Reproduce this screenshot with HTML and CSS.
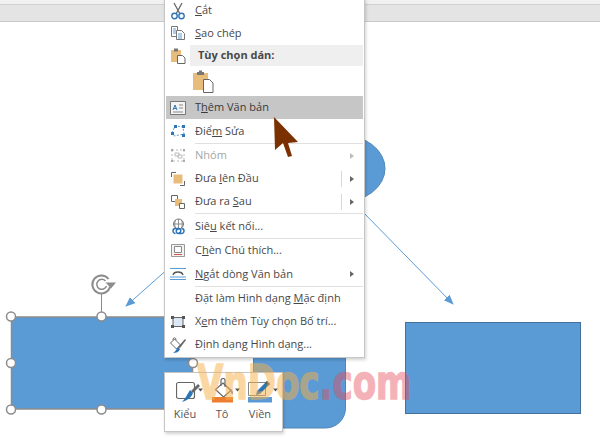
FILE: index.html
```html
<!DOCTYPE html>
<html lang="vi">
<head>
<meta charset="utf-8">
<title>VnDoc</title>
<link rel="stylesheet" href="styles.css">
</head>
<body>
<div class="stage">
  <div class="strip"></div>
  <div class="band"></div>

  <svg class="canvas" width="600" height="447" viewBox="0 0 600 447">
    <defs>
      <marker id="head" markerWidth="10" markerHeight="10" refX="9" refY="4" orient="auto" markerUnits="userSpaceOnUse">
        <path d="M0 0L10 4L0 8z" fill="#5b9bd5"/>
      </marker>
    </defs>
    <ellipse cx="340" cy="168.500" rx="45" ry="34" fill="#5b9bd5" stroke="#4f86b8"/>
    <path d="M253.500 340H345.500V408a20 20 0 0 1-20 20H253.500z" fill="#5b9bd5" stroke="#4f86b8"/>
    <rect x="405.500" y="322.500" width="175" height="91" fill="#5b9bd5" stroke="#41719c"/>
    <line x1="170" y1="267" x2="126" y2="306" stroke="#5b9bd5" marker-end="url(#head)"/>
    <line x1="360" y1="209" x2="453" y2="304" stroke="#5b9bd5" marker-end="url(#head)"/>
    <rect x="11.500" y="317" width="181" height="92" fill="#5b9bd5" stroke="#8c8c8c" stroke-width="1.500"/>
    <line x1="101.500" y1="293" x2="101.500" y2="316" stroke="#8c8c8c"/>
    <path d="M108.500 279a9 9 0 1 0 1.500 8" fill="none" stroke="#8c8c8c" stroke-width="2"/>
    <path d="M105.500 281a5 5 0 1 0 1 5" fill="none" stroke="#8c8c8c" stroke-width="1.500"/>
    <path d="M105.500 282.500h10.500l-5 6z" fill="#8c8c8c"/>
    <g fill="#fff" stroke="#8c8c8c" stroke-width="1.500">
      <circle cx="11" cy="316.500" r="4.500"/>
      <circle cx="101.500" cy="316.500" r="4.500"/>
      <circle cx="193" cy="316.500" r="4.500"/>
      <circle cx="11" cy="363" r="4.500"/>
      <circle cx="193" cy="363" r="4.500"/>
      <circle cx="11" cy="409.500" r="4.500"/>
      <circle cx="101.500" cy="409.500" r="4.500"/>
    </g>
  </svg>

  <div class="menu">
    <div class="row row-cut">
      <span class="ico"><svg width="16" height="18" viewBox="0 0 16 18"><path d="M4 1l6 11M12 1L6 12" stroke="#666" stroke-width="1.300" fill="none"/><circle cx="4.500" cy="14" r="2.700" fill="none" stroke="#2e75b6" stroke-width="1.400"/><circle cx="11.500" cy="14" r="2.700" fill="none" stroke="#2e75b6" stroke-width="1.400"/></svg></span>
      <span class="label"><u>C</u>ắt</span>
    </div>
    <div class="row row-tall">
      <span class="ico"><svg width="16" height="16" viewBox="0 0 16 16"><path d="M1.500 1.500h6v10h-6z" fill="#fff" stroke="#777"/><path d="M6.500 5.500h5l3 3v6h-8z" fill="#fff" stroke="#777"/><path d="M3 4h3M3 6h3M3 8h3M8 9h4M8 11h4M8 13h4" stroke="#5b9bd5"/></svg></span>
      <span class="label"><u>S</u>ao chép</span>
    </div>
    <div class="row row-head">
      <span class="ico"><svg width="16" height="17" viewBox="0 0 16 17"><path d="M1 3h10v12H1z" fill="#e8bd7c"/><path d="M4 1.500h4v3H4z" fill="#777"/><path d="M7.500 8.500h5l2.500 2.500v5.500H7.500z" fill="#fff" stroke="#666"/></svg></span>
      <span class="label label-head">Tùy chọn dán:</span>
    </div>
    <div class="row row-paste">
      <span class="ico"></span>
      <svg class="paste" width="22" height="24" viewBox="0 0 22 24"><path d="M1 4h15v17H1z" fill="#e8bd7c"/><path d="M5 3h7v3H5z" fill="#777"/><path d="M7 1.500h3v2H7z" fill="#777"/><path d="M11.500 10.500h6l3.500 3.500v9.500h-9.500z" fill="#fff" stroke="#666"/></svg>
    </div>
    <div class="row row-on">
      <span class="ico"><svg width="16" height="14" viewBox="0 0 16 14"><path d="M.5.500h15v13H.5z" fill="#f4f4f4" stroke="#777"/><path d="M3 9l2-5 2 5M3.800 7.500h2.400" stroke="#2e75b6" fill="none"/><path d="M9 4h4M9 7h4M3 11h10" stroke="#888"/></svg></span>
      <span class="label">T<u>h</u>êm Văn bản</span>
    </div>
    <div class="row row-last">
      <span class="ico"><svg width="16" height="14" viewBox="0 0 16 14"><path d="M2 9L5 2l8 1 1 7-10 2z" fill="none" stroke="#5b9bd5" stroke-dasharray="2 1.500"/><path d="M4 1h3v3H4zM12 1h3v3h-3zM1 8h3v3H1zM12 10h3v3h-3z" fill="#2e75b6"/></svg></span>
      <span class="label">Điể<u>m</u> Sửa</span>
    </div>
    <div class="sep"></div>
    <div class="row row-off">
      <span class="ico"><svg width="16" height="15" viewBox="0 0 16 15"><path d="M2 2h12v11H2z" fill="none" stroke="#bbb" stroke-dasharray="2 2"/><path d="M5 5h4v3H5zM8 7h4v3H8z" fill="#fff" stroke="#bbb"/><path d="M1 1h2v2H1zM13 1h2v2h-2zM1 12h2v2H1zM13 12h2v2h-2z" fill="#aaa"/></svg></span>
      <span class="label">Nhóm</span>
      <span class="tri tri-off"></span>
    </div>
    <div class="row">
      <span class="ico"><svg width="16" height="16" viewBox="0 0 16 16"><path d="M1.500 6V1.500H6M10 14.500h4.500V10" fill="none" stroke="#666"/><path d="M3.500 3.500h9v9h-9z" fill="#e8bd7c"/></svg></span>
      <span class="label">Đưa <u>l</u>ên Đầu</span>
      <span class="split"></span>
      <span class="tri"></span>
    </div>
    <div class="row">
      <span class="ico"><svg width="16" height="16" viewBox="0 0 16 16"><path d="M1.500 1.500h6v6h-6z" fill="#fff" stroke="#666"/><path d="M5 5h7v7H5z" fill="#e8bd7c"/><path d="M9.500 9.500h5v5h-5z" fill="#fff" stroke="#666"/></svg></span>
      <span class="label">Đưa ra <u>S</u>au</span>
      <span class="split"></span>
      <span class="tri"></span>
    </div>
    <div class="sep"></div>
    <div class="row row-tall">
      <span class="ico"><svg width="17" height="17" viewBox="0 0 17 17"><circle cx="8.500" cy="6" r="5" fill="none" stroke="#777"/><path d="M3.500 6h10M8.500 1v10M5.500 2c-1 2.500-1 5.500 0 8M11.500 2c1 2.500 1 5.500 0 8" fill="none" stroke="#777" stroke-width=".8"/><path d="M5.500 15.500a2.500 2.500 0 0 1 0-5h3a2.200 2.200 0 0 1 0 4.500M11.500 10.500a2.500 2.500 0 0 1 0 5h-3a2.200 2.200 0 0 1 0-4.500" fill="none" stroke="#2e75b6" stroke-width="1.500"/></svg></span>
      <span class="label">Siê<u>u</u> kết nối...</span>
    </div>
    <div class="sep"></div>
    <div class="row">
      <span class="ico"><svg width="16" height="15" viewBox="0 0 16 15"><path d="M1.500 1.500h13v12h-13z" fill="#f2f2f2" stroke="#999"/><path d="M4.500 3.500h7v6h-7z" fill="#fff" stroke="#888"/><path d="M4 11.500h8" stroke="#d9534f"/></svg></span>
      <span class="label">C<u>h</u>èn Chú thích...</span>
    </div>
    <div class="row row-tall">
      <span class="ico"><svg width="16" height="14" viewBox="0 0 16 14"><path d="M0 1.500h16M0 12.500h16M0 10h16" stroke="#5b9bd5"/><path d="M3 8c1-4 9-4 10 0" fill="none" stroke="#555" stroke-width="1.300"/></svg></span>
      <span class="label"><u>N</u>gắt dòng Văn bản</span>
      <span class="tri"></span>
    </div>
    <div class="sep"></div>
    <div class="row">
      <span class="ico"></span>
      <span class="label">Đặt làm Hình dạng <u>M</u>ặc định</span>
    </div>
    <div class="row">
      <span class="ico"><svg width="16" height="14" viewBox="0 0 16 14"><path d="M3 2.500h10v9H3z" fill="#dbe8f5" stroke="#666"/><path d="M1 1h3v3H1zM12 1h3v3h-3zM1 10h3v3H1zM12 10h3v3h-3z" fill="#555"/></svg></span>
      <span class="label">X<u>e</u>m thêm Tùy chọn Bố trí...</span>
    </div>
    <div class="row">
      <span class="ico"><svg width="18" height="18" viewBox="0 0 18 18"><path d="M1.500 7l4-4 6 6-4 4z" fill="#fff" stroke="#666"/><path d="M4 4c0-3 3-3 3 0" fill="none" stroke="#666"/><path d="M16 3l1 1-6 8-2-1z" fill="#666"/><path d="M9 11l2 2c-1 3-4 4-7 4 2-1 3-3 5-6z" fill="#2e75b6"/></svg></span>
      <span class="label">Định dạng Hình dạng...</span>
    </div>
  </div>

  <div class="tools">
    <div class="tool tool-style">
      <svg class="glyph" width="36" height="26" viewBox="0 0 36 26"><rect x=".5" y="4.500" width="18" height="16" rx="2" fill="#fff" stroke="#666" stroke-width="1.200"/><path d="M22 6l2 2-7 7-2-2z" fill="#666"/><path d="M14 12l3 3c-2 5-5 7-11 9 3-3 5-7 8-12z" fill="#2e75b6"/><path d="M22 10.500h5l-2.500 3z" fill="#555"/></svg>
      <span class="tool-name">Kiểu</span>
    </div>
    <div class="tool tool-fill">
      <svg class="glyph" width="36" height="26" viewBox="0 0 36 26"><path d="M11 5l8 7.500-7.500 6.500-8-7.500z" fill="#fff" stroke="#666" stroke-width="1.200"/><path d="M9 8V2.500a2 2 0 0 1 4 0V9" fill="none" stroke="#666" stroke-width="1.200"/><path d="M19 11c2 2 2.500 3.500 1.500 5.500-1.500-1-2-3-1.500-5.500z" fill="#888"/><path d="M23 10.500h5l-2.500 3z" fill="#555"/><rect y="19" width="21" height="5.500" fill="#ed7d31"/></svg>
      <span class="tool-name">Tô</span>
    </div>
    <div class="tool tool-line">
      <svg class="glyph" width="36" height="26" viewBox="0 0 36 26"><path d="M.5 4.500h17v13H.5z" fill="#fff" stroke="#888"/><path d="M19 3l3 3-10 10-4 1 1-4z" fill="#2e75b6"/><path d="M19 3l3 3-2 2-3-3z" fill="#555"/><path d="M25 10.500h5l-2.500 3z" fill="#555"/><rect y="19" width="24" height="5.500" fill="#5b9bd5"/></svg>
      <span class="tool-name">Viền</span>
    </div>
  </div>

  <svg class="pointer" width="30" height="44" viewBox="0 0 30 44"><path d="M1 1L25 26L15 27L19 40L15 41L10 27L2 34z" fill="#7b3000"/></svg>

  <div class="mark"><span class="mark-a">VnDoc</span><span class="mark-b">.com</span></div>
</div>
</body>
</html>
```
FILE: styles.css
```css
* {
  box-sizing: border-box;
}

html,
body {
  margin: 0;
  padding: 0;
  background: #fff;
}

.stage {
  position: relative;
  width: 600px;
  height: 447px;
  overflow: hidden;
  background: #fff;
  font-family: "Open Sans", "Noto Sans", sans-serif;
}

.strip {
  height: 5px;
  background: #f1f1f1;
  border-bottom: 1px solid #d0d0d0;
}

.band {
  height: 17px;
  background: #e4e4e4;
  border-bottom: 1px solid #c9c9c9;
}

.canvas {
  position: absolute;
  left: 0;
  top: 0;
}

.menu {
  position: absolute;
  left: 164px;
  top: -2px;
  width: 201px;
  height: 360px;
  padding: 1px;
  background: #fff;
  border: 1px solid #c6c6c6;
  box-shadow: 1px 2px 3px rgba(0, 0, 0, 0.18);
  color: #484848;
  font-size: 11px;
}

.row {
  display: flex;
  align-items: center;
  height: 23px;
}

.row-cut {
  height: 21px;
}

.row-tall {
  height: 24px;
}

.row-head {
  height: 21px;
}

.row-paste {
  height: 30px;
}

.row-last {
  height: 24px;
}

.row-on {
  background: #c6c6c6;
  color: #3a3a3a;
}

.row-off {
  color: #a6a6a6;
}

.ico {
  flex: none;
  display: flex;
  align-items: center;
  justify-content: center;
  width: 24px;
  margin-right: 5px;
}

.label {
  flex: 1;
  padding-bottom: 2px;
  white-space: nowrap;
}

.label u {
  text-underline-offset: 1px;
}

.label-head {
  align-self: stretch;
  display: flex;
  align-items: center;
  margin-left: -5px;
  padding-left: 8px;
  background: #efefef;
  font-weight: 700;
}

.paste {
  margin-left: -3px;
}

.sep {
  height: 1px;
  margin-left: 29px;
  background: #e0e0e0;
}

.split {
  width: 1px;
  height: 16px;
  margin-right: 8px;
  background: #d8d8d8;
}

.tri {
  width: 0;
  height: 0;
  margin-right: 9px;
  border-left: 4px solid #666;
  border-top: 3.5px solid transparent;
  border-bottom: 3.5px solid transparent;
}

.tri-off {
  border-left-color: #bdbdbd;
}

.tools {
  position: absolute;
  left: 164px;
  top: 372px;
  width: 119px;
  height: 60px;
  display: flex;
  padding: 5px 0 0 11px;
  background: #fff;
  border: 1px solid #c6c6c6;
  box-shadow: 1px 2px 3px rgba(0, 0, 0, 0.18);
  color: #555;
  font-size: 11px;
}

.tool {
  display: flex;
  flex-direction: column;
  align-items: flex-start;
  width: 36px;
}

.glyph {
  flex: none;
}

.tool-name {
  display: flex;
  justify-content: center;
  margin-top: 2px;
  white-space: nowrap;
}

.tool-style .tool-name {
  width: 18px;
}

.tool-fill .tool-name {
  width: 20px;
}

.tool-line .tool-name {
  width: 24px;
}

.pointer {
  position: absolute;
  left: 273px;
  top: 116px;
}

.mark {
  position: absolute;
  left: 197px;
  top: 354px;
  font-family: "DejaVu Sans", sans-serif;
  font-size: 48px;
  font-weight: 700;
  line-height: 56px;
  white-space: nowrap;
  transform: scaleX(0.71);
  transform-origin: left top;
}

.mark-a {
  color: #f7b048;
  opacity: 0.5;
  -webkit-text-stroke: 1.500px #f7b048;
}

.mark-b {
  color: #e84858;
  opacity: 0.42;
  -webkit-text-stroke: 1.500px #e84858;
}
```
